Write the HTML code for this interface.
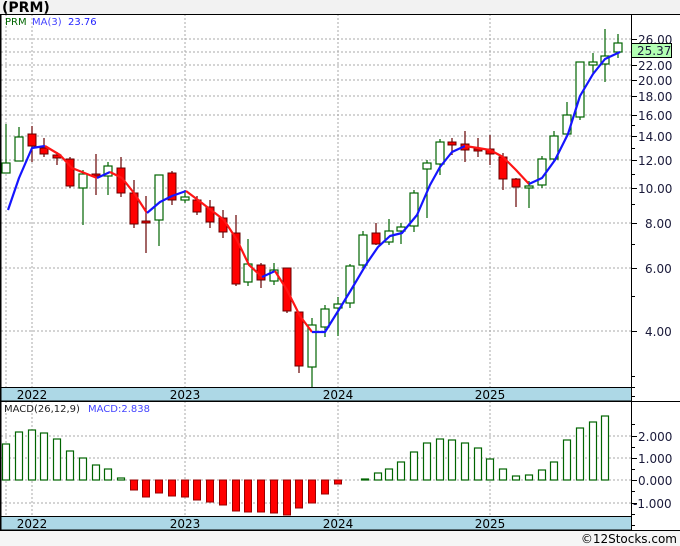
<!DOCTYPE html>
<html><head><meta charset="utf-8"><style>
html,body{margin:0;padding:0;background:#fff;}
svg{display:block;font-family:"DejaVu Sans","Liberation Sans",sans-serif;}
.gr{stroke:#aaa;stroke-width:1;stroke-dasharray:2,2;fill:none}
.g rect{fill:#fff;stroke:#006400;stroke-width:1.2}
.g line{stroke:#006400;stroke-width:1.2}
.r rect{fill:#f00;stroke:#600;stroke-width:1}
.r line{stroke:#600;stroke-width:1.2}
.ax{font-size:12px;fill:#1a1a3a}
.yr{font-size:12px;fill:#000}
</style></head><body>
<svg width="680" height="546" viewBox="0 0 680 546">
<rect x="0" y="0" width="680" height="14" fill="#f2f2f2"/>
<text x="2" y="12" font-size="14" font-weight="bold" fill="#000">(PRM)</text>
<rect x="0" y="530" width="680" height="16" fill="#f5f5f5"/>
<text x="677" y="543" font-size="12" fill="#000" text-anchor="end">©12Stocks.com</text>

<!-- grid main -->
<g class="gr">
<line x1="1" x2="631" y1="39" y2="39"/><line x1="1" x2="631" y1="52" y2="52"/><line x1="1" x2="631" y1="65" y2="65"/>
<line x1="1" x2="631" y1="80" y2="80"/><line x1="1" x2="631" y1="96" y2="96"/><line x1="1" x2="631" y1="115" y2="115"/>
<line x1="1" x2="631" y1="136" y2="136"/><line x1="1" x2="631" y1="160" y2="160"/><line x1="1" x2="631" y1="188" y2="188"/>
<line x1="1" x2="631" y1="223" y2="223"/><line x1="1" x2="631" y1="268" y2="268"/><line x1="1" x2="631" y1="331" y2="331"/>
<line x1="6" x2="6" y1="14" y2="387"/><line x1="32" x2="32" y1="14" y2="387"/><line x1="185" x2="185" y1="14" y2="387"/>
<line x1="338" x2="338" y1="14" y2="387"/><line x1="490" x2="490" y1="14" y2="387"/>
<line x1="1" x2="631" y1="436" y2="436"/><line x1="1" x2="631" y1="458" y2="458"/><line x1="1" x2="631" y1="480" y2="480"/><line x1="1" x2="631" y1="503" y2="503"/>
<line x1="6" x2="6" y1="401" y2="516"/><line x1="32" x2="32" y1="401" y2="516"/><line x1="185" x2="185" y1="401" y2="516"/>
<line x1="338" x2="338" y1="401" y2="516"/><line x1="490" x2="490" y1="401" y2="516"/>
</g>

<text x="5" y="25" font-size="10" fill="#006400">PRM</text>
<text x="32" y="25" font-size="10" fill="#4444ff">MA(3)</text>
<text x="68" y="25" font-size="10" fill="#2222ff">23.76</text>

<!-- candles -->
<g class="g"><line x1="6" x2="6" y1="124" y2="173"/><rect x="2" y="163" width="8" height="10"/></g>
<g class="g"><line x1="19" x2="19" y1="127" y2="161"/><rect x="15" y="137" width="8" height="24"/></g>
<g class="r"><line x1="32" x2="32" y1="126" y2="162"/><rect x="28" y="134" width="8" height="12"/></g>
<g class="r"><line x1="44" x2="44" y1="138" y2="157"/><rect x="40" y="148" width="8" height="6"/></g>
<g class="r"><line x1="57" x2="57" y1="152" y2="165"/><rect x="53" y="155" width="8" height="3"/></g>
<g class="r"><line x1="70" x2="70" y1="157" y2="188"/><rect x="66" y="159" width="8" height="27"/></g>
<g class="g"><line x1="83" x2="83" y1="170" y2="225"/><rect x="79" y="174" width="8" height="14"/></g>
<g class="r"><line x1="96" x2="96" y1="154" y2="195"/><rect x="92" y="174" width="8" height="2"/></g>
<g class="g"><line x1="108" x2="108" y1="162" y2="195"/><rect x="104" y="166" width="8" height="10"/></g>
<g class="r"><line x1="121" x2="121" y1="157" y2="197"/><rect x="117" y="168" width="8" height="25"/></g>
<g class="r"><line x1="134" x2="134" y1="180" y2="228"/><rect x="130" y="193" width="8" height="31"/></g>
<g class="r"><line x1="146" x2="146" y1="196" y2="253"/><rect x="142" y="221" width="8" height="2"/></g>
<g class="g"><line x1="159" x2="159" y1="175" y2="246"/><rect x="155" y="175" width="8" height="45"/></g>
<g class="r"><line x1="172" x2="172" y1="171" y2="205"/><rect x="168" y="173" width="8" height="27"/></g>
<g class="g"><line x1="185" x2="185" y1="190" y2="203"/><rect x="181" y="197" width="8" height="3"/></g>
<g class="r"><line x1="197" x2="197" y1="196" y2="215"/><rect x="193" y="200" width="8" height="12"/></g>
<g class="r"><line x1="210" x2="210" y1="200" y2="228"/><rect x="206" y="207" width="8" height="15"/></g>
<g class="r"><line x1="223" x2="223" y1="210" y2="238"/><rect x="219" y="218" width="8" height="14"/></g>
<g class="r"><line x1="236" x2="236" y1="215" y2="286"/><rect x="232" y="233" width="8" height="51"/></g>
<g class="g"><line x1="248" x2="248" y1="239" y2="286"/><rect x="244" y="264" width="8" height="18"/></g>
<g class="r"><line x1="261" x2="261" y1="263" y2="288"/><rect x="257" y="265" width="8" height="15"/></g>
<g class="g"><line x1="274" x2="274" y1="263" y2="285"/><rect x="270" y="270" width="8" height="11"/></g>
<g class="r"><line x1="287" x2="287" y1="268" y2="313"/><rect x="283" y="268" width="8" height="43"/></g>
<g class="r"><line x1="299" x2="299" y1="312" y2="373"/><rect x="295" y="312" width="8" height="54"/></g>
<g class="g"><line x1="312" x2="312" y1="318" y2="387"/><rect x="308" y="325" width="8" height="42"/></g>
<g class="g"><line x1="325" x2="325" y1="305" y2="337"/><rect x="321" y="309" width="8" height="18"/></g>
<g class="g"><line x1="338" x2="338" y1="297" y2="336"/><rect x="334" y="304" width="8" height="4"/></g>
<g class="g"><line x1="350" x2="350" y1="264" y2="308"/><rect x="346" y="266" width="8" height="37"/></g>
<g class="g"><line x1="363" x2="363" y1="231" y2="268"/><rect x="359" y="235" width="8" height="30"/></g>
<g class="r"><line x1="376" x2="376" y1="223" y2="245"/><rect x="372" y="233" width="8" height="11"/></g>
<g class="g"><line x1="389" x2="389" y1="219" y2="245"/><rect x="385" y="231" width="8" height="11"/></g>
<g class="g"><line x1="401" x2="401" y1="223" y2="244"/><rect x="397" y="227" width="8" height="4"/></g>
<g class="g"><line x1="414" x2="414" y1="190" y2="232"/><rect x="410" y="193" width="8" height="33"/></g>
<g class="g"><line x1="427" x2="427" y1="160" y2="218"/><rect x="423" y="163" width="8" height="6"/></g>
<g class="g"><line x1="440" x2="440" y1="139" y2="175"/><rect x="436" y="142" width="8" height="22"/></g>
<g class="r"><line x1="452" x2="452" y1="138" y2="155"/><rect x="448" y="142" width="8" height="3"/></g>
<g class="r"><line x1="465" x2="465" y1="131" y2="162"/><rect x="461" y="144" width="8" height="6"/></g>
<g class="r"><line x1="478" x2="478" y1="138" y2="157"/><rect x="474" y="149" width="8" height="2"/></g>
<g class="r"><line x1="490" x2="490" y1="135" y2="165"/><rect x="486" y="149" width="8" height="5"/></g>
<g class="r"><line x1="503" x2="503" y1="153" y2="190"/><rect x="499" y="157" width="8" height="22"/></g>
<g class="r"><line x1="516" x2="516" y1="178" y2="207"/><rect x="512" y="179" width="8" height="8"/></g>
<g class="g"><line x1="529" x2="529" y1="181" y2="208"/><rect x="525" y="186" width="8" height="2"/></g>
<g class="g"><line x1="542" x2="542" y1="156" y2="188"/><rect x="538" y="159" width="8" height="26"/></g>
<g class="g"><line x1="554" x2="554" y1="131" y2="162"/><rect x="550" y="136" width="8" height="23"/></g>
<g class="g"><line x1="567" x2="567" y1="102" y2="137"/><rect x="563" y="115" width="8" height="19"/></g>
<g class="g"><line x1="580" x2="580" y1="62" y2="120"/><rect x="576" y="62" width="8" height="55"/></g>
<g class="g"><line x1="593" x2="593" y1="53" y2="73"/><rect x="589" y="62" width="8" height="3"/></g>
<g class="g"><line x1="605" x2="605" y1="29" y2="82"/><rect x="601" y="56" width="8" height="8"/></g>
<g class="g"><line x1="618" x2="618" y1="34" y2="58"/><rect x="614" y="43" width="8" height="9"/></g>

<!-- MA -->
<g fill="none" stroke-width="2.2" stroke-linejoin="round">
<polyline stroke="#1515ff" points="8,210 19,178 32,148 45,146"/>
<polyline stroke="#ff1515" points="45,146 60,155 72,168 97,178"/>
<polyline stroke="#1515ff" points="97,178 110,172"/>
<polyline stroke="#ff1515" points="110,172 122,178 134,193 147,213"/>
<polyline stroke="#1515ff" points="147,213 160,202 172,196 186,191"/>
<polyline stroke="#ff1515" points="186,191 198,200 211,210 224,220 237,240 249,265 262,277"/>
<polyline stroke="#1515ff" points="262,277 275,271"/>
<polyline stroke="#ff1515" points="275,271 287,290 300,316 312,332"/>
<polyline stroke="#1515ff" points="312,332 325,332 340,308 351,290 367,263 378,247 390,236 402,233 417,215 430,185 440,167 452,152 465,146"/>
<polyline stroke="#ff1515" points="465,146 478,148 490,150 503,157 516,170 529,184"/>
<polyline stroke="#1515ff" points="529,184 542,178 555,160 568,134 580,96 593,74 605,59 620,52"/>
</g>

<!-- MACD bars -->
<g fill="#fff" stroke="#006400" stroke-width="1.2">
<rect x="2.5" y="444" width="7" height="36"/><rect x="15.5" y="432" width="7" height="48"/><rect x="28.5" y="430" width="7" height="50"/>
<rect x="40.5" y="433" width="7" height="47"/><rect x="53.5" y="439" width="7" height="41"/><rect x="66.5" y="451" width="7" height="29"/>
<rect x="79.5" y="458" width="7" height="22"/><rect x="92.5" y="465" width="7" height="15"/><rect x="104.5" y="469" width="7" height="11"/>
<rect x="117.5" y="478" width="7" height="2"/>
<rect x="361.5" y="479" width="7" height="1"/><rect x="374.5" y="473" width="7" height="7"/><rect x="385.5" y="469" width="7" height="11"/>
<rect x="397.5" y="462" width="7" height="18"/><rect x="410.5" y="452" width="7" height="28"/><rect x="423.5" y="443" width="7" height="37"/>
<rect x="436.5" y="439" width="7" height="41"/><rect x="448.5" y="440" width="7" height="40"/><rect x="461.5" y="443" width="7" height="37"/>
<rect x="474.5" y="448" width="7" height="32"/><rect x="486.5" y="459" width="7" height="21"/><rect x="499.5" y="469" width="7" height="11"/>
<rect x="512.5" y="476" width="7" height="4"/><rect x="525.5" y="475" width="7" height="5"/><rect x="538.5" y="470" width="7" height="10"/>
<rect x="550.5" y="462" width="7" height="18"/><rect x="563.5" y="440" width="7" height="40"/><rect x="576.5" y="428" width="7" height="52"/>
<rect x="589.5" y="422" width="7" height="58"/><rect x="601.5" y="416" width="7" height="64"/>
</g>
<g fill="#f00" stroke="#900" stroke-width="1">
<rect x="130.5" y="480" width="7" height="10"/><rect x="142.5" y="480" width="7" height="17"/><rect x="155.5" y="480" width="7" height="13"/>
<rect x="168.5" y="480" width="7" height="16"/><rect x="181.5" y="480" width="7" height="17"/><rect x="193.5" y="480" width="7" height="20"/>
<rect x="206.5" y="480" width="7" height="22"/><rect x="219.5" y="480" width="7" height="25"/><rect x="232.5" y="480" width="7" height="31"/>
<rect x="244.5" y="480" width="7" height="32"/><rect x="257.5" y="480" width="7" height="32"/><rect x="270.5" y="480" width="7" height="33"/>
<rect x="283.5" y="480" width="7" height="35"/><rect x="295.5" y="480" width="7" height="28"/><rect x="308.5" y="480" width="7" height="23"/>
<rect x="321.5" y="480" width="7" height="14"/><rect x="334.5" y="480" width="7" height="4"/>
</g>

<text x="4" y="412" font-size="10" fill="#222">MACD(26,12,9)</text>
<text x="88" y="412" font-size="10" fill="#4444ff">MACD:2.838</text>

<!-- date bands -->
<rect x="0.5" y="387.5" width="631" height="13.5" fill="#add8e6" stroke="#000"/>
<rect x="0.5" y="516.5" width="631" height="13.5" fill="#add8e6" stroke="#000"/>
<g font-size="12" fill="#000" text-anchor="middle">
<text x="32" y="399">2022</text><text x="185" y="399">2023</text><text x="338" y="399">2024</text><text x="490" y="399">2025</text>
<text x="32" y="528">2022</text><text x="185" y="528">2023</text><text x="338" y="528">2024</text><text x="490" y="528">2025</text>
</g>

<!-- borders -->
<line x1="0" x2="680" y1="14.5" y2="14.5" stroke="#000"/>
<line x1="0.5" x2="0.5" y1="14" y2="530" stroke="#000" stroke-width="2"/>
<line x1="631.5" x2="631.5" y1="14" y2="530" stroke="#000"/>
<line x1="0" x2="680" y1="401.5" y2="401.5" stroke="#000"/>
<line x1="0" x2="680" y1="530.5" y2="530.5" stroke="#000"/>

<!-- right axis ticks -->
<g stroke="#000">
<line x1="631" x2="637" y1="39.5" y2="39.5"/><line x1="631" x2="637" y1="52.5" y2="52.5"/><line x1="631" x2="637" y1="65.5" y2="65.5"/>
<line x1="631" x2="637" y1="80.5" y2="80.5"/><line x1="631" x2="637" y1="96.5" y2="96.5"/><line x1="631" x2="637" y1="115.5" y2="115.5"/>
<line x1="631" x2="637" y1="136.5" y2="136.5"/><line x1="631" x2="637" y1="160.5" y2="160.5"/><line x1="631" x2="637" y1="188.5" y2="188.5"/>
<line x1="631" x2="637" y1="223.5" y2="223.5"/><line x1="631" x2="637" y1="268.5" y2="268.5"/><line x1="631" x2="637" y1="331.5" y2="331.5"/>
<line x1="631" x2="635" y1="125.5" y2="125.5"/><line x1="631" x2="635" y1="148.5" y2="148.5"/><line x1="631" x2="635" y1="174.5" y2="174.5"/>
<line x1="631" x2="635" y1="204.5" y2="204.5"/><line x1="631" x2="635" y1="244.5" y2="244.5"/><line x1="631" x2="635" y1="296.5" y2="296.5"/>
<line x1="631" x2="635" y1="376.5" y2="376.5"/><line x1="631" x2="635" y1="387.5" y2="387.5"/>
<line x1="631" x2="637" y1="436.5" y2="436.5"/><line x1="631" x2="637" y1="458.5" y2="458.5"/><line x1="631" x2="637" y1="480.5" y2="480.5"/>
<line x1="631" x2="637" y1="503.5" y2="503.5"/><line x1="631" x2="635" y1="424.5" y2="424.5"/><line x1="631" x2="635" y1="447.5" y2="447.5"/>
<line x1="631" x2="635" y1="469.5" y2="469.5"/><line x1="631" x2="635" y1="491.5" y2="491.5"/><line x1="631" x2="635" y1="514.5" y2="514.5"/>
<line x1="631" x2="635" y1="525.5" y2="525.5"/><line x1="631" x2="635" y1="396.5" y2="396.5"/>
</g>
<g class="ax">
<text x="638" y="44">26.00</text><text x="638" y="70">22.00</text><text x="638" y="85">20.00</text>
<text x="638" y="101">18.00</text><text x="638" y="120">16.00</text><text x="638" y="141">14.00</text>
<text x="638" y="165">12.00</text><text x="638" y="193">10.00</text><text x="645" y="228">8.00</text>
<text x="645" y="273">6.00</text><text x="645" y="336">4.00</text>
<text x="638" y="441">2.000</text><text x="638" y="463">1.000</text><text x="638" y="485">0.000</text><text x="633" y="508">-1.000</text>
</g>
<rect x="631.5" y="43.5" width="40" height="14" fill="#b3ffb3" stroke="#000"/>
<text x="637" y="55" class="ax">25.37</text>
</svg>
</body></html>
